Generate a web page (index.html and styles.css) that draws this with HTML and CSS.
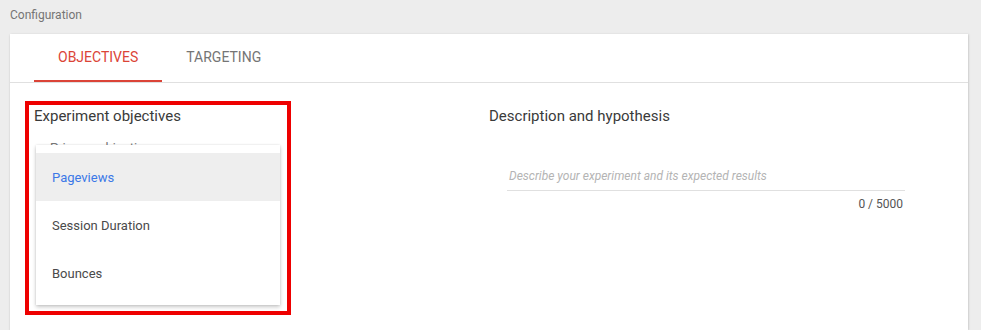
FILE: index.html
```html
<!DOCTYPE html>
<html>
<head>
    <title>Configuration</title>
    <link rel="stylesheet" href="styles.css">
</head>
<body>
    <div class="page-title">Configuration</div>
    <div class="card">
        <div class="tabs">
            <div class="tab active">Objectives</div>
            <div class="tab">Targeting</div>
        </div>
        <div class="content">
            <div class="column objectives">
                <h2>Experiment objectives</h2>
                <div class="field-label">Primary objective</div>
                <div class="menu">
                    <div class="menu-item selected">Pageviews</div>
                    <div class="menu-item">Session Duration</div>
                    <div class="menu-item">Bounces</div>
                </div>
            </div>
            <div class="column">
                <h2>Description and hypothesis</h2>
                <div class="text-field">
                    <div class="placeholder">Describe your experiment and its expected results</div>
                    <div class="counter">0 / 5000</div>
                </div>
            </div>
            <div class="highlight"></div>
        </div>
    </div>
</body>
</html>
```

FILE: styles.css
```css
body {
    font-family: Roboto, "Liberation Sans", Arial, sans-serif;
    background-color: #ededed;
    margin: 0;
    padding: 0;
    overflow: hidden;
}
.page-title {
    font-size: 12px;
    color: #757575;
    padding: 8px 10px 0;
    height: 34px;
    line-height: 14px;
    box-sizing: border-box;
}
.card {
    position: relative;
    background-color: #fff;
    margin-left: 10px;
    width: 958px;
    min-height: 296px;
    box-shadow: 0 1px 2px rgba(0, 0, 0, 0.15), 1px 0 2px rgba(0, 0, 0, 0.08);
}
.tabs {
    display: flex;
    padding-left: 24px;
    height: 48px;
    border-bottom: 1px solid #e0e0e0;
}
.tab {
    padding: 0 24px;
    font-size: 14px;
    text-transform: uppercase;
    color: #757575;
    line-height: 46px;
    border-bottom: 2px solid transparent;
}
.tab.active {
    color: #db4437;
    border-bottom-color: #db4437;
}
.content {
    display: grid;
    grid-template-columns: 455px 455px;
    padding: 24px 24px 0;
}
.column {
    position: relative;
}
.column h2 {
    font-size: 15px;
    font-weight: normal;
    color: #3a3a3a;
    margin: 0;
    line-height: 18px;
}
.field-label {
    font-size: 13px;
    color: #777;
    margin: 15px 0 0 16px;
}
.menu {
    position: absolute;
    left: 2px;
    top: 38px;
    width: 244px;
    padding: 8px 0;
    background-color: #fff;
    box-shadow: 0 2px 4px rgba(0, 0, 0, 0.22), 0 0 2px rgba(0, 0, 0, 0.1);
}
.menu-item {
    height: 48px;
    line-height: 50px;
    padding-left: 16px;
    font-size: 13px;
    color: #4a4a4a;
}
.menu-item.selected {
    background-color: #eeeeee;
    color: #3b78e7;
}
.text-field {
    margin: 43px 0 0 18px;
    width: 398px;
}
.placeholder {
    font-size: 12px;
    font-style: italic;
    color: #b4b4b4;
    padding: 0 0 0 2px;
    line-height: 16px;
    padding-bottom: 6px;
    border-bottom: 1px solid #e0e0e0;
}
.counter {
    text-align: right;
    font-size: 12px;
    color: #555;
    padding: 6px 2px 0 0;
}
.highlight {
    position: absolute;
    left: 15px;
    top: 67px;
    width: 266px;
    height: 214px;
    border: 4px solid #ee0000;
    box-sizing: border-box;
}
```
